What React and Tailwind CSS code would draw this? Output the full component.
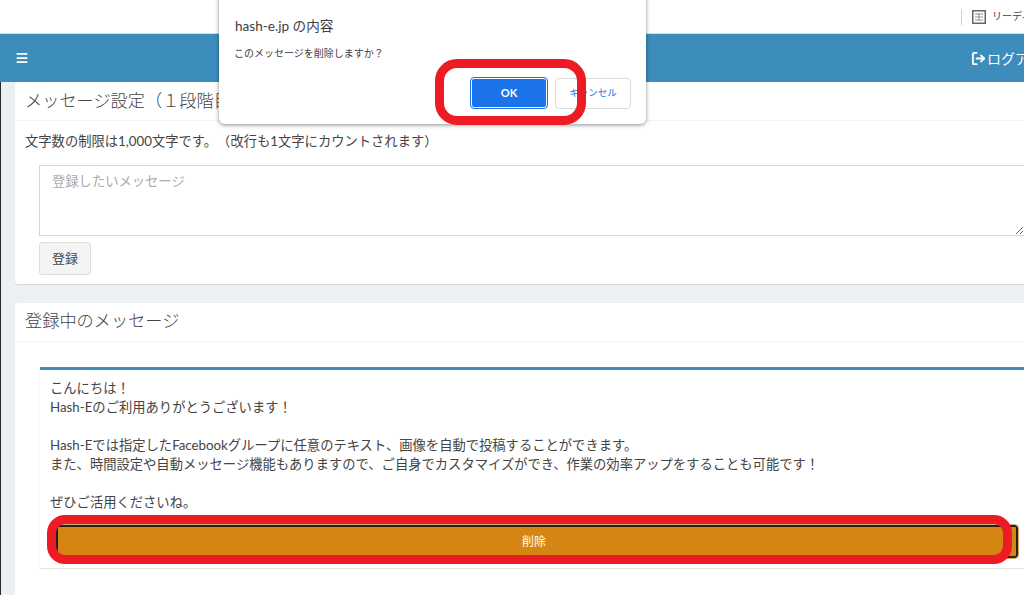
import React from "react";
import { Menu, LogOut } from "lucide-react";

const jp = "font-['Lato','Noto_Sans_CJK_JP',sans-serif] [text-spacing-trim:space-all]";

function ReaderIcon() {
  return (
    <svg width="14" height="14" viewBox="0 0 14 14" className="text-[#666]">
      <rect x="0.75" y="0.75" width="12.5" height="12.5" fill="none" stroke="currentColor" strokeWidth="1.5" />
      <path d="M3 4h8M3 7h8M3 10h8M7 3v8" stroke="currentColor" strokeWidth="1" opacity="0.7" />
    </svg>
  );
}

function Card({ title, titleClass, children }) {
  return (
    <section className="w-[1040px] rounded-[3px] bg-white shadow-[0_1px_1px_rgba(0,0,0,0.1)]">
      <h2 className={`flex h-[39px] items-center border-b border-[#f4f4f4] px-[10px] text-[17.2px] font-light text-[#444] ${titleClass}`}>
        {title}
      </h2>
      {children}
    </section>
  );
}

export default function App() {
  return (
    <div className={`relative h-[595px] w-[1024px] overflow-hidden bg-white text-[13.3px] text-[#444] ${jp}`}>
      {/* browser toolbar */}
      <div className="flex h-[34px] items-center justify-end border-b border-[#d8dde2] bg-white">
        <div className="mr-[10px] h-[16px] w-px bg-[#d0d0d0]" />
        <ReaderIcon />
        <span className="ml-[6px] w-[32px] overflow-hidden whitespace-nowrap text-[10px] text-[#444]">リーディング</span>
      </div>

      {/* app header */}
      <header className="flex h-[48px] items-center justify-between bg-[#3c8dbc] pl-[15px] text-white">
        <Menu size={14} strokeWidth={3} />
        <div className="flex w-[53px] items-center overflow-hidden whitespace-nowrap text-[14px]">
          <LogOut size={15} strokeWidth={3} className="mr-px shrink-0" />
          ログアウト
        </div>
      </header>

      {/* content */}
      <main className="h-[513px] border-l border-[#222d32] bg-[#ecf0f5] pl-[14px]">
        <Card title="メッセージ設定（１段階目）" titleClass="">
          <div className="h-[163px] pt-[10px] pl-[10px]">
            <p className="leading-[20px]">文字数の制限は1,000文字です。（改行も1文字にカウントされます）</p>
            <div className="pl-[14px]">
              <textarea
                readOnly
                placeholder="登録したいメッセージ"
                className="mt-[14px] block h-[71px] w-[986px] border border-[#d2d6de] px-[12px] py-[6px] text-[13.3px] outline-none placeholder:text-[#aaa]"
              />
              <button className="mt-[6px] h-[33px] w-[52px] rounded-[3px] border border-[#ddd] bg-[#f4f4f4] text-[13px] text-[#444]">
                登録
              </button>
            </div>
          </div>
        </Card>

        <div className="mt-[19px]">
          <Card title="登録中のメッセージ" titleClass="pb-[3px]">
            <div className="h-[300px] pt-[25px] pl-[25px]">
              <div className="w-[1000px] border-t-[3px] border-[#3c8dbc] pb-[10px] shadow-[0_1px_1px_rgba(0,0,0,0.1)]">
                <div className="pt-[9px] pl-[10px] leading-[19px]">
                  <p>こんにちは！</p>
                  <p>Hash-Eのご利用ありがとうございます！</p>
                  <p>&nbsp;</p>
                  <p>Hash-Eでは指定したFacebookグループに任意のテキスト、画像を自動で投稿することができます。</p>
                  <p>また、時間設定や自動メッセージ機能もありますので、ご自身でカスタマイズができ、作業の効率アップをすることも可能です！</p>
                  <p>&nbsp;</p>
                  <p>ぜひご活用くださいね。</p>
                </div>
                <div className="mt-[13px] pl-[16px]">
                  <button className="block h-[33px] w-[962px] rounded-[3px] border-2 border-[#222] bg-[#d58512] pr-[6px] text-[12px] text-white outline outline-1 outline-[#d9a766]">
                    削除
                  </button>
                </div>
              </div>
            </div>
          </Card>
        </div>
      </main>

      {/* confirm dialog */}
      <div className="absolute top-[-8px] left-[219px] h-[132px] w-[427px] rounded-[6px] bg-white pt-[24px] pr-[15px] pl-[16px] shadow-[0_1px_4px_rgba(0,0,0,0.45)]">
        <p className="text-[13.6px] leading-[20px] text-[#3c4043]">hash-e.jp の内容</p>
        <p className="mt-[9px] -ml-px text-[10px] leading-[16px] text-[#3c4043]">このメッセージを削除しますか？</p>
        <div className="mt-[17px] flex justify-end gap-[8px]">
          <button className="h-[30px] w-[76px] rounded-[3px] border border-white bg-[#1a73e8] text-[11px] font-bold text-white outline outline-1 outline-[#1a73e8]">
            OK
          </button>
          <button className="h-[31px] w-[76px] rounded-[4px] border border-[#dadce0] bg-white text-[9.5px] text-[#1a73e8]">
            キャンセル
          </button>
        </div>
      </div>

      {/* red annotations */}
      <div className="absolute top-[59px] left-[435px] h-[66px] w-[151px] rounded-[22px] border-[9px] border-[#ed1c24]" />
      <div className="absolute top-[515px] left-[47px] h-[49px] w-[965px] rounded-[18px] border-[9px] border-[#ed1c24]" />
    </div>
  );
}
